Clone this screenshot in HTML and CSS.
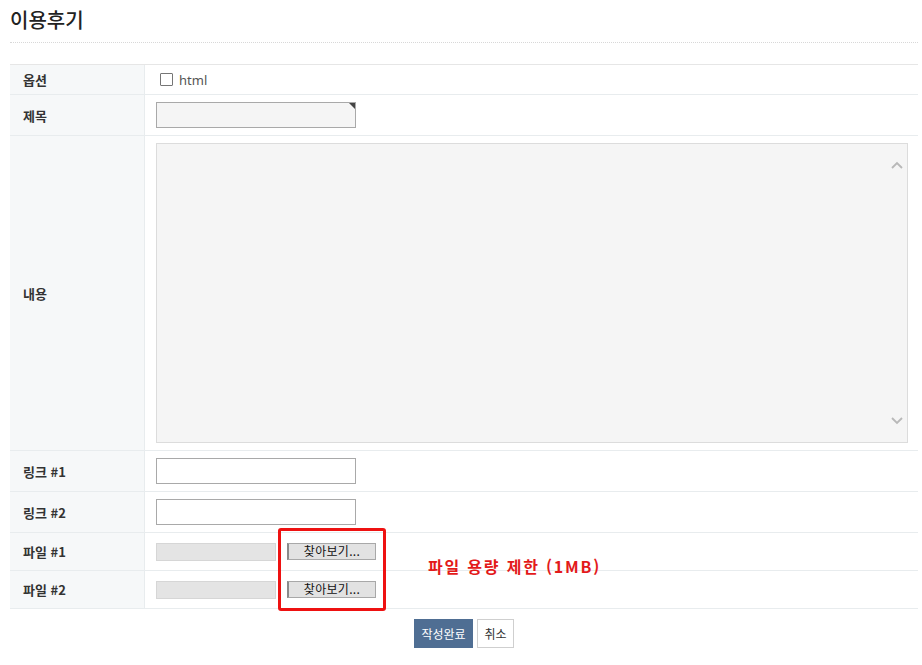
FILE: index.html
```html
<!DOCTYPE html>
<html lang="ko">
<head>
<meta charset="utf-8">
<title>이용후기</title>
<link rel="stylesheet" href="styles.css">
</head>
<body>
<div class="page">
  <h1 class="title">이용후기</h1>
  <div class="form">
    <div class="label row-opt">옵션</div>
    <div class="field row-opt"><span class="check"></span><span class="check-text">html</span></div>

    <div class="label row-subj">제목</div>
    <div class="field row-subj"><span class="input-wrap"><input class="input input-gray" type="text"><span class="corner"></span></span></div>

    <div class="label row-body">내용</div>
    <div class="field row-body">
      <div class="area-wrap">
        <textarea class="area"></textarea>
        <svg class="chev chev-up" width="12" height="8" viewBox="0 0 12 8"><path d="M1 7 L6 2 L11 7" fill="none" stroke="#b8b8b8" stroke-width="1.8"/></svg>
        <svg class="chev chev-down" width="12" height="8" viewBox="0 0 12 8"><path d="M1 1 L6 6 L11 1" fill="none" stroke="#b8b8b8" stroke-width="1.8"/></svg>
      </div>
    </div>

    <div class="label row-link">링크 #1</div>
    <div class="field row-link"><input class="input" type="text"></div>

    <div class="label row-link">링크 #2</div>
    <div class="field row-link"><input class="input" type="text"></div>

    <div class="label row-file">파일 #1</div>
    <div class="field row-file"><span class="file-box"></span><span class="file-btn">찾아보기...</span></div>

    <div class="label row-file">파일 #2</div>
    <div class="field row-file"><span class="file-box"></span><span class="file-btn">찾아보기...</span></div>

    <div class="highlight"></div>
    <div class="note">파일 용량 제한 (1MB)</div>
  </div>
  <div class="actions">
    <button class="btn btn-primary" type="button">작성완료</button>
    <button class="btn btn-cancel" type="button">취소</button>
  </div>
</div>
</body>
</html>
```

FILE: styles.css
```css
* { box-sizing: border-box; }
html, body { margin: 0; padding: 0; background: #fff; }
body {
  font-family: "Noto Sans CJK KR", "Noto Sans", "Liberation Sans", sans-serif;
  color: #333;
  font-size: 12px;
}
.page { width: 908px; margin-left: 10px; }
.title {
  margin: 0;
  height: 43px;
  padding-top: 6px;
  font-size: 20px;
  line-height: 28px;
  font-weight: 500;
  color: #222;
  border-bottom: 1px dotted #d8d8d8;
}
.form {
  position: relative;
  margin-top: 21px;
  display: grid;
  grid-template-columns: 135px 1fr;
  border-top: 1px solid #e6e6e6;
}
.label {
  background: #f6f8f9;
  border-right: 1px solid #e8ecee;
  border-bottom: 1px solid #e8ecee;
  display: flex;
  align-items: center;
  padding-left: 13px;
  font-weight: bold;
  font-size: 13px;
  color: #333;
}
.field {
  border-bottom: 1px solid #e8ecee;
  display: flex;
  align-items: center;
  padding-left: 11px;
}
.row-opt { height: 30px; }
.row-subj { height: 41px; }
.row-body { height: 315px; }
.row-link { height: 41px; }
.row-file { height: 38px; }
.check {
  display: inline-block;
  width: 13px; height: 13px;
  border: 1px solid #767676;
  border-radius: 1px;
  margin-left: 4px;
  background: #fff;
}
.check-text { margin-left: 6px; font-size: 13px; color: #555; font-family: "Noto Sans", "Liberation Sans", sans-serif; }
.input-wrap { position: relative; display: inline-block; }
.input {
  width: 200px; height: 26px;
  border: 1px solid #a9a9a9;
  background: #fff;
  margin: 0;
  padding: 0 4px;
  display: block;
}
.input-gray { background: #f5f5f5; }
.corner {
  position: absolute;
  right: 1px; top: 1px;
  width: 0; height: 0;
  border-top: 6px solid #444;
  border-left: 6px solid transparent;
}
.area-wrap { position: relative; width: 752px; height: 300px; }
.area {
  width: 100%; height: 100%;
  border: 1px solid #dcdcdc;
  background: #f5f5f5;
  resize: none;
  overflow: hidden;
  margin: 0;
  display: block;
}
.chev { position: absolute; right: 5px; }
.chev-up { top: 18px; }
.chev-down { bottom: 18px; }
.file-box {
  display: inline-block;
  width: 120px; height: 18px;
  background: #e4e4e4;
  border: 1px solid #d6d6d6;
}
.file-btn {
  display: inline-block;
  margin-left: 11px;
  width: 89px; height: 17px;
  background: #e2e2e2;
  border: 1px solid #a8a8a8;
  border-left: 2px solid #8a8a8a;
  font-size: 12px;
  line-height: 14px;
  text-align: center;
  color: #111;
  letter-spacing: 0.3px;
}
.highlight {
  position: absolute;
  left: 268px; top: 463px;
  width: 108px; height: 83px;
  border: 3px solid #ee1111;
  border-radius: 3px;
}
.note {
  position: absolute;
  left: 418px; top: 491px;
  color: #e31a1a;
  font-weight: bold;
  font-size: 16px;
  letter-spacing: 1.8px;
  line-height: 20px;
}
.actions {
  display: flex;
  justify-content: center;
  gap: 4px;
  margin-top: 10px;
}
.btn {
  font-family: inherit;
  font-size: 12px;
  height: 29px;
  margin: 0;
  cursor: pointer;
}
.btn-primary {
  width: 59px;
  background: #4f6e93;
  color: #fff;
  border: 0;
}
.btn-cancel {
  width: 37px;
  background: #fff;
  color: #333;
  border: 1px solid #cfcfcf;
  padding: 0;
}
```
